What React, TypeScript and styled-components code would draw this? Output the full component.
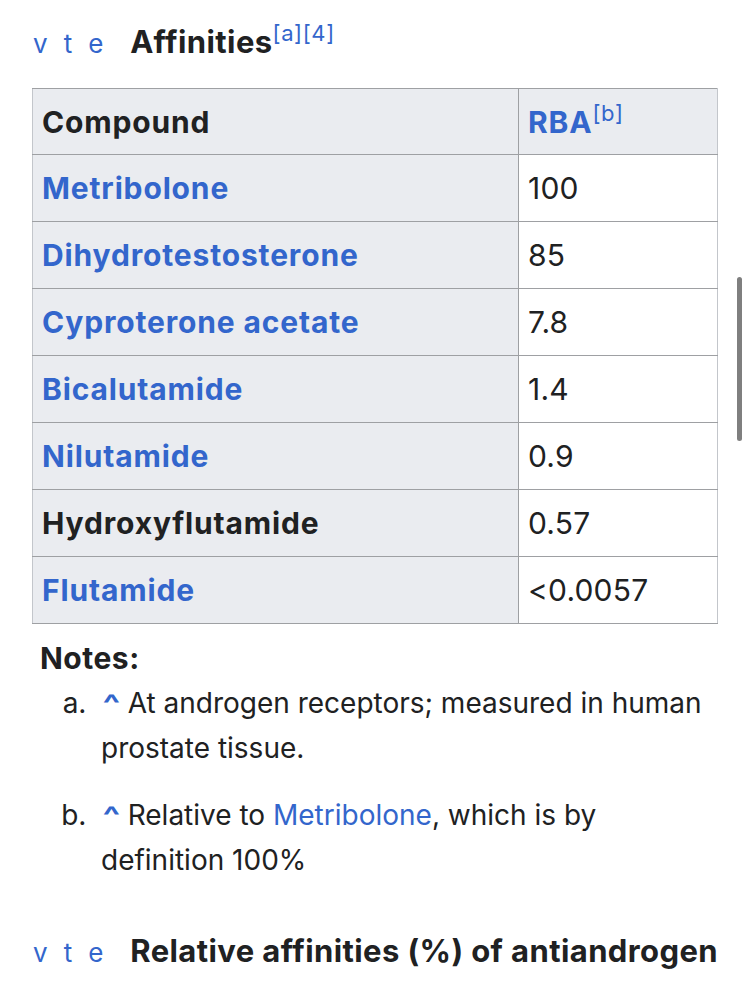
import React from "react";
import styled, { createGlobalStyle } from "styled-components";

const Global = createGlobalStyle`
  html, body { margin: 0; padding: 0; background: #fff; }
  body { font-family: Inter, "Noto Sans", sans-serif; color: #202122; overflow: hidden; }
`;

const Page = styled.div`
  position: relative;
  width: 750px;
  height: 983px;
  overflow: hidden;
  padding: 20px 32px 0 32px;
  box-sizing: border-box;
`;

const TitleBar = styled.div`
  display: flex;
  align-items: baseline;
  height: 68px;
  padding-top: 3px;
  box-sizing: border-box;
  white-space: nowrap;
`;

const Navbar = styled.div`
  display: flex;
  gap: 16px;
  font-size: 26px;
  margin-right: 27px;
  margin-left: 1px;
`;

const NavLink = styled.a`
  color: #3366cc;
  text-decoration: none;
  font-weight: 400;
`;

const Title = styled.div`
  font-size: 31px;
  font-weight: 700;
  letter-spacing: 0.4px;
  color: #202122;
`;

const Sup = styled.sup`
  font-size: 22px;
  font-weight: 400;
  letter-spacing: 0.6px;
  color: #3366cc;
  vertical-align: 12px;
  line-height: 0;
  margin-left: 0;
`;

const Table = styled.table`
  width: 686px;
  border-collapse: collapse;
  border: 1px solid #c3c6cb;
  font-size: 30px;
`;

const Row = styled.tr`
  height: 67px;
`;

const HeadRow = styled.tr`
  height: 66px;
`;

const Cell = styled.td<{ $head?: boolean; $bold?: boolean }>`
  border: 1px solid #9ea0a3;
  border-left-color: #c3c6cb;
  padding: 0 9px;
  background: ${(p) => (p.$head ? "#eaecf0" : "#fff")};
  font-weight: ${(p) => (p.$bold ? 700 : 400)};
  letter-spacing: ${(p) => (p.$bold ? "0.85px" : "0.2px")};
  text-align: left;
  vertical-align: middle;
  color: #202122;
  &:last-child { border-right-color: #c3c6cb; border-left-color: #888b8e; }
`;

const HeadCell = styled(Cell).attrs({ as: "th" })``;

const CellLink = styled.a`
  color: #3366cc;
  text-decoration: none;
`;

const Notes = styled.div`
  padding: 16px 0 0 8px;
  font-size: 28px;
`;

const NotesTitle = styled.div`
  font-weight: 700;
  font-size: 30px;
  letter-spacing: 0.5px;
  line-height: 36px;
`;

const NoteList = styled.ol`
  list-style: lower-alpha;
  margin: 5px 0 0 0;
  padding-left: 61px;
  line-height: 45px;
  & > li + li { margin-top: 22px; }
  & > li::marker { content: counter(list-item, lower-alpha) ".\\00a0\\00a0"; }
`;

const Caret = styled.span`
  color: #3366cc;
  font-weight: 700;
  font-size: 26px;
  display: inline-block;
  transform: scaleX(1.4);
  margin: 0 10px 0 4px;
`;

const Inline = styled.a`
  color: #3366cc;
  text-decoration: none;
`;

const NextTitle = styled(TitleBar)`
  margin-top: 46px;
`;

const Scrollbar = styled.div`
  position: absolute;
  right: 8px;
  top: 277px;
  width: 5px;
  height: 164px;
  border-radius: 3px;
  background: #7f7f7f;
`;

const compounds: { name: string; link: boolean; rba: string }[] = [
  { name: "Metribolone", link: true, rba: "100" },
  { name: "Dihydrotestosterone", link: true, rba: "85" },
  { name: "Cyproterone acetate", link: true, rba: "7.8" },
  { name: "Bicalutamide", link: true, rba: "1.4" },
  { name: "Nilutamide", link: true, rba: "0.9" },
  { name: "Hydroxyflutamide", link: false, rba: "0.57" },
  { name: "Flutamide", link: true, rba: "<0.0057" },
];

const Nav = () => (
  <Navbar>
    <NavLink>v</NavLink>
    <NavLink>t</NavLink>
    <NavLink>e</NavLink>
  </Navbar>
);

export default function App() {
  return (
    <>
      <Global />
      <Page>
        <TitleBar>
          <Nav />
          <Title>
            Affinities<Sup>[a][4]</Sup>
          </Title>
        </TitleBar>
        <Table>
          <tbody>
            <HeadRow>
              <HeadCell $head $bold style={{ width: 467 }}>Compound</HeadCell>
              <HeadCell $head $bold>
                <CellLink>RBA</CellLink>
                <Sup>[b]</Sup>
              </HeadCell>
            </HeadRow>
            {compounds.map((c) => (
              <Row key={c.name}>
                <Cell $head $bold>
                  {c.link ? <CellLink>{c.name}</CellLink> : c.name}
                </Cell>
                <Cell>{c.rba}</Cell>
              </Row>
            ))}
          </tbody>
        </Table>
        <Notes>
          <NotesTitle>Notes:</NotesTitle>
          <NoteList>
            <li>
              <Caret>^</Caret>At androgen receptors; measured in human prostate tissue.
            </li>
            <li>
              <Caret>^</Caret>Relative to <Inline>Metribolone</Inline>, which is by
              definition 100%
            </li>
          </NoteList>
        </Notes>
        <NextTitle>
          <Nav />
          <Title>Relative affinities (%) of antiandrogen</Title>
        </NextTitle>
        <Scrollbar />
      </Page>
    </>
  );
}
